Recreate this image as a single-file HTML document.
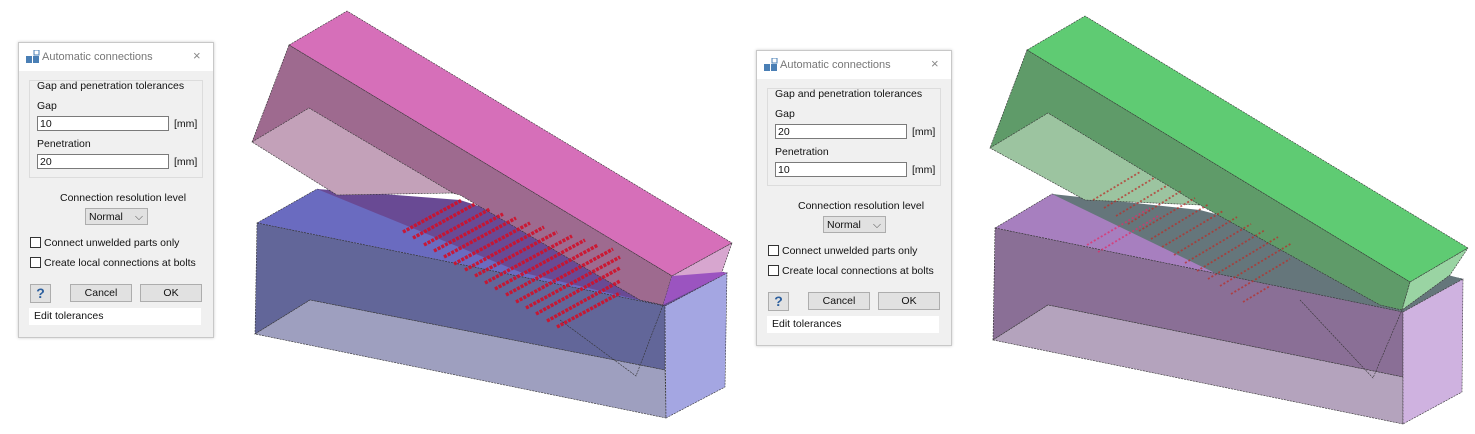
<!DOCTYPE html>
<html><head><meta charset="utf-8"><style>
body{margin:0;width:1475px;height:434px;background:#fff;position:relative;overflow:hidden;font-family:"Liberation Sans",sans-serif;font-size:10.5px;color:#111}
.dlg{position:absolute;width:194px;height:294px;background:#f0f0f0;border:1px solid #c8c8c8;box-shadow:0 0 3px rgba(0,0,0,.2)}
.tb{position:absolute;left:0;top:0;width:194px;height:28px;background:#fff}
.a{position:absolute;white-space:nowrap}
.grp{position:absolute;left:10px;top:37px;width:172px;height:96px;border:1px solid #dcdcdc}
.in{position:absolute;background:#fff;border:1px solid #7a7a7a;height:15px;line-height:15px;padding-left:2px;box-sizing:border-box}
.cb{position:absolute;width:11px;height:11px;border:1px solid #333;background:#fff;box-sizing:border-box}
.btn{position:absolute;background:#e1e1e1;border:1px solid #adadad;box-sizing:border-box;text-align:center;line-height:16px}
</style></head><body>

<div class="dlg" style="left:18px;top:42px">
 <div class="tb"></div>
 <svg class="a" style="left:7px;top:7px" width="14" height="14"><rect x="0" y="6" width="6" height="7" fill="#4a7fb5"/><rect x="7" y="6" width="6" height="7" fill="#4a7fb5"/><rect x="8" y="0" width="5" height="5" fill="none" stroke="#4a7fb5"/></svg>
 <div class="a" style="left:23px;top:8px;color:#777;font-size:11px">Automatic connections</div>
 <div class="a" style="left:174px;top:5px;color:#888;font-size:13px">×</div>
 <div class="grp"></div>
 <div class="a" style="left:18px;top:37px">Gap and penetration tolerances</div>
 <div class="a" style="left:18px;top:57px">Gap</div>
 <div class="in" style="left:18px;top:73px;width:132px">10</div>
 <div class="a" style="left:155px;top:75px">[mm]</div>
 <div class="a" style="left:18px;top:95px">Penetration</div>
 <div class="in" style="left:18px;top:111px;width:132px">20</div>
 <div class="a" style="left:155px;top:113px">[mm]</div>
 <div class="a" style="left:41px;top:149px">Connection resolution level</div>
 <div class="btn" style="left:66px;top:165px;width:63px;height:17px;text-align:left;padding-left:3px">Normal <span style="position:absolute;right:4px;color:#555">⌵</span></div>
 <div class="cb" style="left:11px;top:194px"></div><div class="a" style="left:25px;top:194px">Connect unwelded parts only</div>
 <div class="cb" style="left:11px;top:214px"></div><div class="a" style="left:25px;top:214px">Create local connections at bolts</div>
 <div class="btn" style="left:11px;top:241px;width:21px;height:19px;color:#2c5f9e;font-weight:bold;font-size:14px">?</div>
 <div class="btn" style="left:51px;top:241px;width:62px;height:18px">Cancel</div>
 <div class="btn" style="left:121px;top:241px;width:62px;height:18px">OK</div>
 <div class="a" style="left:10px;top:265px;width:172px;height:17px;background:#fff;line-height:17px;padding-left:5px;box-sizing:border-box">Edit tolerances</div>
</div>

<div class="dlg" style="left:756px;top:50px">
 <div class="tb"></div>
 <svg class="a" style="left:7px;top:7px" width="14" height="14"><rect x="0" y="6" width="6" height="7" fill="#4a7fb5"/><rect x="7" y="6" width="6" height="7" fill="#4a7fb5"/><rect x="8" y="0" width="5" height="5" fill="none" stroke="#4a7fb5"/></svg>
 <div class="a" style="left:23px;top:8px;color:#777;font-size:11px">Automatic connections</div>
 <div class="a" style="left:174px;top:5px;color:#888;font-size:13px">×</div>
 <div class="grp"></div>
 <div class="a" style="left:18px;top:37px">Gap and penetration tolerances</div>
 <div class="a" style="left:18px;top:57px">Gap</div>
 <div class="in" style="left:18px;top:73px;width:132px">20</div>
 <div class="a" style="left:155px;top:75px">[mm]</div>
 <div class="a" style="left:18px;top:95px">Penetration</div>
 <div class="in" style="left:18px;top:111px;width:132px">10</div>
 <div class="a" style="left:155px;top:113px">[mm]</div>
 <div class="a" style="left:41px;top:149px">Connection resolution level</div>
 <div class="btn" style="left:66px;top:165px;width:63px;height:17px;text-align:left;padding-left:3px">Normal <span style="position:absolute;right:4px;color:#555">⌵</span></div>
 <div class="cb" style="left:11px;top:194px"></div><div class="a" style="left:25px;top:194px">Connect unwelded parts only</div>
 <div class="cb" style="left:11px;top:214px"></div><div class="a" style="left:25px;top:214px">Create local connections at bolts</div>
 <div class="btn" style="left:11px;top:241px;width:21px;height:19px;color:#2c5f9e;font-weight:bold;font-size:14px">?</div>
 <div class="btn" style="left:51px;top:241px;width:62px;height:18px">Cancel</div>
 <div class="btn" style="left:121px;top:241px;width:62px;height:18px">OK</div>
 <div class="a" style="left:10px;top:265px;width:172px;height:17px;background:#fff;line-height:17px;padding-left:5px;box-sizing:border-box">Edit tolerances</div>
</div>

<svg class="a" style="left:0;top:0" width="1475" height="434">
<g stroke="#333" stroke-width="0.6" stroke-dasharray="2 1">
 <!-- blue box -->
 <polygon points="257,223 317,189 727,273 665,306" fill="#6a6bc0"/>
 <polygon points="317,189 460,200 640,258 727,273 665,306 520,272" fill="#694a94" stroke="none"/>
 <polygon points="257,223 665,306 665,370 310,300 255,334" fill="#626699"/>
 <polygon points="255,334 310,300 665,370 666,418" fill="#9e9fbf"/>
 <polygon points="665,306 727,273 725,387 666,418" fill="#a4a6e2"/>
 <!-- pink beam -->
 <polygon points="289,45 347,11 732,243 672,276" fill="#d66fb9"/>
 <polygon points="289,45 672,276 663,305 640,300 460,195 252,142" fill="#9e6a8f"/>
 <polygon points="252,142 309,108 453,193 337,195" fill="#c3a1b9"/>
 <polygon points="672,276 732,243 722,272 663,305" fill="#d7a6cf"/>
 <polygon points="663,305 672,276 722,272 727,273" fill="#9b54c0" stroke="none"/>
 <polyline points="560,320 636,376 663,305" fill="none"/>
</g>
<g stroke="#d0102a" stroke-width="3.5" stroke-dasharray="3 1.2" fill="none" opacity="0.9">
 <line x1="403" y1="232" x2="462" y2="200"/><line x1="413" y1="238" x2="475" y2="204"/>
 <line x1="424" y1="245" x2="490" y2="209"/><line x1="434" y1="251" x2="503" y2="214"/>
 <line x1="444" y1="257" x2="516" y2="218"/><line x1="454" y1="264" x2="530" y2="223"/>
 <line x1="465" y1="270" x2="544" y2="227"/><line x1="475" y1="276" x2="557" y2="232"/>
 <line x1="485" y1="283" x2="572" y2="236"/><line x1="495" y1="289" x2="585" y2="240"/>
 <line x1="506" y1="295" x2="598" y2="245"/><line x1="516" y1="302" x2="613" y2="249"/>
 <line x1="526" y1="308" x2="620" y2="257"/><line x1="536" y1="314" x2="620" y2="268"/>
 <line x1="547" y1="321" x2="620" y2="281"/><line x1="557" y1="327" x2="620" y2="293"/>
</g>

<g stroke="#333" stroke-width="0.6" stroke-dasharray="2 1">
 <!-- purple box -->
 <polygon points="995,228 1052,194 1463,279 1403,312" fill="#a77fbf"/>
 <polygon points="1052,194 1200,210 1463,279 1403,312 1250,290" fill="#65767b" stroke="none"/>
 <polygon points="995,228 1403,312 1403,377 1048,305 993,340" fill="#8a6f96"/>
 <polygon points="993,340 1048,305 1403,377 1403,424" fill="#b4a3bd"/>
 <polygon points="1403,312 1463,279 1462,392 1403,424" fill="#cfb2e0"/>
 <!-- green beam -->
 <polygon points="1027,50 1085,16 1468,248 1410,282" fill="#5fcb73"/>
 <polygon points="1027,50 1410,282 1402,310 1380,305 1200,205 990,148" fill="#5f9b69"/>
 <polygon points="990,148 1048,113 1200,205 1085,200" fill="#9cc4a0"/>
 <polygon points="1410,282 1468,248 1450,275 1402,310" fill="#9ad4a3"/>
 <polyline points="1300,300 1373,378 1402,310" fill="none"/>
</g>
<g stroke="#b8302a" stroke-width="1.8" stroke-dasharray="2 2" fill="none" opacity="0.75">
 <line x1="1093" y1="200" x2="1140" y2="172"/><line x1="1104" y1="208" x2="1154" y2="178"/>
 <line x1="1116" y1="216" x2="1168" y2="185"/><line x1="1128" y1="224" x2="1181" y2="191"/>
 <line x1="1139" y1="231" x2="1195" y2="198"/><line x1="1151" y1="239" x2="1209" y2="204"/>
 <line x1="1162" y1="247" x2="1223" y2="211"/><line x1="1174" y1="255" x2="1237" y2="217"/>
 <line x1="1185" y1="263" x2="1251" y2="224"/><line x1="1197" y1="271" x2="1265" y2="230"/>
 <line x1="1208" y1="279" x2="1278" y2="237"/><line x1="1220" y1="286" x2="1292" y2="243"/>
 <line x1="1231" y1="294" x2="1290" y2="259"/><line x1="1243" y1="302" x2="1270" y2="286"/>
 <line x1="1087" y1="245" x2="1150" y2="208" stroke="#e0306a"/><line x1="1098" y1="252" x2="1160" y2="215" stroke="#e0306a"/>
</g>
</svg>
</body></html>
